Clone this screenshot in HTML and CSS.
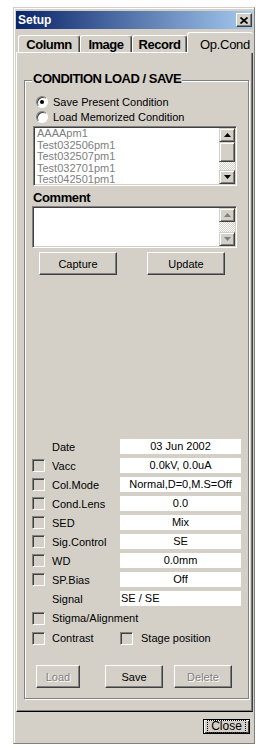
FILE: index.html
```html
<!DOCTYPE html>
<html lang="en">
<head>
  <meta charset="UTF-8" />
  <title>Setup</title>
  <link rel="stylesheet" href="styles.css">
</head>
<body>
  <div class="window">
    <div class="titlebar">
      <span class="title">Setup</span>
      <span class="close-x">
        <svg width="8" height="7" viewBox="0 0 8 7"><path d="M0.5 0.5L7.5 6.5M7.5 0.5L0.5 6.5" stroke="#000" stroke-width="1.7"/></svg>
      </span>
    </div>

    <div class="tabs">
      <div class="tab tab-column">Column</div>
      <div class="tab tab-image">Image</div>
      <div class="tab tab-record">Record</div>
      <div class="tab active">Op.Cond</div>
    </div>

    <div class="panel">
      <div class="group">
        <div class="legend">CONDITION LOAD / SAVE</div>

        <div class="radio-row"><span class="radio checked"></span>Save Present Condition</div>
        <div class="radio-row"><span class="radio"></span>Load Memorized Condition</div>

        <div class="listbox">
          <div class="items">
            <div>AAAApm1</div>
            <div>Test032506pm1</div>
            <div>Test032507pm1</div>
            <div>Test032701pm1</div>
            <div>Test042501pm1</div>
          </div>
          <div class="scrollbar">
            <div class="sb-btn sb-up"><svg width="7" height="4" viewBox="0 0 7 4"><polygon points="3.5,0 7,4 0,4"/></svg></div>
            <div class="sb-thumb"></div>
            <div class="sb-track"></div>
            <div class="sb-btn sb-down"><svg width="7" height="4" viewBox="0 0 7 4"><polygon points="0,0 7,0 3.5,4"/></svg></div>
          </div>
        </div>

        <div class="comment-label">Comment</div>
        <div class="textbox">
          <div class="items"></div>
          <div class="scrollbar disabled">
            <div class="sb-btn sb-up"><svg width="7" height="4" viewBox="0 0 7 4"><polygon points="3.5,0 7,4 0,4"/></svg></div>
            <div class="sb-track"></div>
            <div class="sb-btn sb-down"><svg width="7" height="4" viewBox="0 0 7 4"><polygon points="0,0 7,0 3.5,4"/></svg></div>
          </div>
        </div>

        <div class="btn-row">
          <button class="btn btn-capture">Capture</button>
          <button class="btn btn-update">Update</button>
        </div>

        <div class="cond-list">
          <div class="row"><span class="cb-space"></span><span class="label">Date</span><span class="field">03 Jun 2002</span></div>
          <div class="row"><span class="cb"></span><span class="label">Vacc</span><span class="field">0.0kV, 0.0uA</span></div>
          <div class="row"><span class="cb"></span><span class="label">Col.Mode</span><span class="field">Normal,D=0,M.S=Off</span></div>
          <div class="row"><span class="cb"></span><span class="label">Cond.Lens</span><span class="field">0.0</span></div>
          <div class="row"><span class="cb"></span><span class="label">SED</span><span class="field">Mix</span></div>
          <div class="row"><span class="cb"></span><span class="label">Sig.Control</span><span class="field">SE</span></div>
          <div class="row"><span class="cb"></span><span class="label">WD</span><span class="field">0.0mm</span></div>
          <div class="row"><span class="cb"></span><span class="label">SP.Bias</span><span class="field">Off</span></div>
          <div class="row"><span class="cb-space"></span><span class="label">Signal</span><span class="field left">SE / SE</span></div>
          <div class="row tall"><span class="cb"></span><span>Stigma/Alignment</span></div>
          <div class="row tall"><span class="cb"></span><span class="label">Contrast</span><span class="cb cb-stage"></span><span>Stage position</span></div>
        </div>

        <div class="btn-row bottom">
          <button class="btn btn-load" disabled>Load</button>
          <button class="btn btn-save">Save</button>
          <button class="btn btn-delete" disabled>Delete</button>
        </div>
      </div>
    </div>

    <div class="footer">
      <button class="btn btn-close"><span class="focus">Close</span></button>
    </div>
  </div>
</body>
</html>
```

FILE: styles.css
```css
body {
  margin: 0;
  background: #fff;
  font-family: "Liberation Sans", Arial, sans-serif;
  font-size: 11px;
  color: #000;
}
.window {
  margin: 7px 0 0 13px;
  width: 242px;
  height: 737px;
  box-sizing: border-box;
  background: #d4d0c8;
  border: 1px solid #d4d0c8;
  border-right-color: #808080;
  border-bottom-color: #808080;
  box-shadow: inset 1px 1px #fff;
  padding: 3px 1px 0 2px;
  display: flex;
  flex-direction: column;
}
.titlebar {
  height: 18px;
  flex: none;
  display: flex;
  align-items: center;
  justify-content: space-between;
  padding-left: 2px;
  background: linear-gradient(to right, #0a246a, #a6caf0);
  color: #fff;
  font-weight: bold;
  font-size: 12px;
}
.close-x {
  width: 16px;
  height: 14px;
  box-sizing: border-box;
  margin-right: 1px;
  background: #d4d0c8;
  border: 1px solid;
  border-color: #fff #404040 #404040 #fff;
  box-shadow: inset -1px -1px #808080;
  display: flex;
  align-items: center;
  justify-content: center;
}

/* tabs */
.tabs {
  height: 23px;
  flex: none;
  display: flex;
  align-items: flex-end;
  padding-left: 2px;
}
.tab {
  height: 17px;
  box-sizing: border-box;
  border-top: 1px solid #fff;
  border-left: 1px solid #fff;
  border-right: 1px solid #404040;
  box-shadow: inset -1px 0 #808080;
  border-radius: 3px 3px 0 0;
  padding-top: 1px;
  font-weight: bold;
  font-size: 13px;
  letter-spacing: -0.5px;
  line-height: 15px;
  text-align: center;
}
.tab-column { width: 62px; }
.tab-image { width: 52px; }
.tab-record { width: 55px; }
.tab.active {
  flex: 1;
  height: 21px;
  margin-bottom: -1px;
  position: relative;
  z-index: 1;
  background: #d4d0c8;
  border-right: none;
  box-shadow: none;
  padding: 4px 0 0 12px;
  font-weight: normal;
  letter-spacing: -0.3px;
  text-align: left;
}

/* panel */
.panel {
  height: 660px;
  flex: none;
  box-sizing: border-box;
  border: 1px solid #fff;
  border-right-color: #404040;
  border-bottom-color: #000;
  box-shadow: inset -1px -1px #808080;
  padding: 27px 0 0 7px;
}
.group {
  position: relative;
  width: 225px;
  height: 619px;
  box-sizing: border-box;
  border: 1px solid #808080;
  box-shadow: inset 1px 1px #fff, 1px 1px #fff;
  padding: 13px 0 0 7px;
}
.legend {
  position: absolute;
  top: -9px;
  left: 7px;
  padding: 0 1px;
  background: #d4d0c8;
  font-weight: bold;
  font-size: 13px;
  letter-spacing: -0.5px;
  line-height: 14px;
}
.radio-row {
  height: 15px;
  display: flex;
  align-items: center;
  padding-left: 4px;
}
.radio {
  width: 12px;
  height: 12px;
  box-sizing: border-box;
  margin-right: 5px;
  border-radius: 50%;
  border: 1px solid;
  border-color: #808080 #fff #fff #808080;
  box-shadow: inset 1px 1px #404040;
  background: #fff;
  display: flex;
  align-items: center;
  justify-content: center;
}
.radio.checked::after {
  content: "";
  width: 4px;
  height: 4px;
  border-radius: 50%;
  background: #000;
}

/* list boxes */
.listbox, .textbox {
  display: flex;
  box-sizing: border-box;
  background: #fff;
  border: 1px solid;
  border-color: #808080 #fff #fff #808080;
  box-shadow: inset 1px 1px #404040, inset -1px -1px #d4d0c8;
  padding: 1px;
}
.listbox {
  margin: 2px 0 0 1px;
  width: 204px;
  height: 60px;
}
.textbox {
  width: 205px;
  height: 42px;
}
.items {
  flex: 1;
  padding-left: 2px;
  color: #808080;
  line-height: 11.5px;
  overflow: hidden;
}
.scrollbar {
  width: 16px;
  display: flex;
  flex-direction: column;
}
.sb-btn {
  height: 14px;
  box-sizing: border-box;
  background: #d4d0c8;
  border: 1px solid;
  border-color: #d4d0c8 #404040 #404040 #d4d0c8;
  box-shadow: inset 1px 1px #fff, inset -1px -1px #808080;
  display: flex;
  align-items: center;
  justify-content: center;
}
.sb-thumb {
  height: 20px;
  box-sizing: border-box;
  background: #d4d0c8;
  border: 1px solid;
  border-color: #d4d0c8 #404040 #404040 #d4d0c8;
  box-shadow: inset 1px 1px #fff, inset -1px -1px #808080;
}
.sb-track {
  flex: 1;
  background: repeating-conic-gradient(#fff 0 25%, #d4d0c8 0 50%) 0 0 / 2px 2px;
}
.disabled svg { fill: #808080; }
.comment-label {
  margin: 4px 0 0 1px;
  font-weight: bold;
  font-size: 13px;
  letter-spacing: -0.4px;
  line-height: 16px;
}

/* buttons */
.btn-row {
  display: flex;
  margin-top: 4px;
}
.btn {
  height: 23px;
  box-sizing: border-box;
  padding: 0;
  background: #d4d0c8;
  border: 1px solid;
  border-color: #fff #404040 #404040 #fff;
  box-shadow: inset -1px -1px #808080;
  font-family: "Liberation Sans", Arial, sans-serif;
  font-size: 11px;
  color: #000;
}
.btn:disabled {
  color: #808080;
  text-shadow: 1px 1px #fff;
}
.btn-capture { width: 78px; margin-left: 7px; }
.btn-update { width: 78px; margin-left: 30px; }
.btn-row.bottom { margin-top: 17px; }
.btn-load { width: 44px; margin-left: 4px; }
.btn-save { width: 58px; margin-left: 25px; }
.btn-delete { width: 58px; margin-left: 11px; }

/* condition rows */
.cond-list { margin-top: 162px; }
.row {
  height: 19px;
  display: flex;
  align-items: center;
}
.row.tall { height: 20px; }
.cb, .cb-space {
  width: 13px;
  height: 13px;
  flex: none;
  box-sizing: border-box;
  margin-right: 7px;
}
.cb {
  border: 1px solid;
  border-color: #808080 #fff #fff #808080;
  box-shadow: inset 1px 1px #404040, inset -1px -1px #d4d0c8;
  background: #d4d0c8;
}
.cb-stage { margin-right: 8px; }
.label { width: 68px; }
.field {
  width: 121px;
  height: 15px;
  background: #fff;
  text-align: center;
  line-height: 15px;
}
.field.left {
  text-align: left;
  box-sizing: border-box;
  padding-left: 1px;
}

/* footer */
.footer {
  height: 31px;
  flex: none;
  display: flex;
  justify-content: flex-end;
  align-items: flex-start;
  padding: 7px 3px 0 0;
  box-sizing: border-box;
}
.btn-close {
  width: 47px;
  height: 15px;
  border: 1px solid #000;
  box-shadow: inset 1px 1px #fff, inset -1px -1px #404040;
  font-size: 12px;
  display: flex;
  align-items: center;
  justify-content: center;
}
.focus {
  outline: 1px dotted #000;
  padding: 0 3px;
  line-height: 11px;
}
```
